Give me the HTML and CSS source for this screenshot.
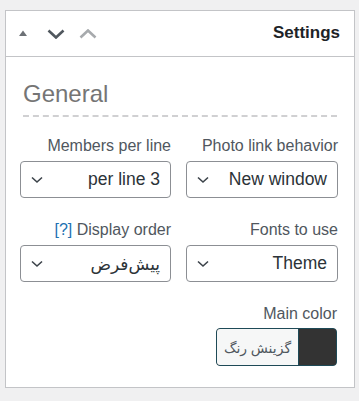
FILE: index.html
```html
<!DOCTYPE html>
<html lang="en">
<head>
<meta charset="utf-8">
<link rel="stylesheet" href="styles.css">
</head>
<body>
<div class="panel">
  <div class="panel-head">
    <div class="head-icons">
      <svg class="ico-tri" width="8" height="6" viewBox="0 0 8 6"><path d="M0 6 L4 0.5 L8 6 Z" fill="#6d7176"/></svg>
      <svg class="ico-down" width="18" height="10" viewBox="0 0 18 10"><path d="M1.5 1.5 L9 8.5 L16.5 1.5" fill="none" stroke="#50575e" stroke-width="2.6"/></svg>
      <svg class="ico-up" width="18" height="10" viewBox="0 0 18 10"><path d="M1.5 8.5 L9 1.5 L16.5 8.5" fill="none" stroke="#a7aaad" stroke-width="2.6"/></svg>
    </div>
    <h2 class="panel-title">Settings</h2>
  </div>
  <div class="panel-body">
    <h3 class="section-title">General</h3>
    <div class="fields">
      <div class="field">
        <label class="field-label">Members per line</label>
        <div class="select"><svg class="sel-chev" width="12" height="8" viewBox="0 0 12 8"><path d="M1 1.5 L6 6 L11 1.5" fill="none" stroke="#3c434a" stroke-width="1.6"/></svg><span class="sel-value">per line 3</span></div>
      </div>
      <div class="field">
        <label class="field-label">Photo link behavior</label>
        <div class="select"><svg class="sel-chev" width="12" height="8" viewBox="0 0 12 8"><path d="M1 1.5 L6 6 L11 1.5" fill="none" stroke="#3c434a" stroke-width="1.6"/></svg><span class="sel-value">New window</span></div>
      </div>
      <div class="field">
        <label class="field-label"><span class="help">[?]</span> Display order</label>
        <div class="select"><svg class="sel-chev" width="12" height="8" viewBox="0 0 12 8"><path d="M1 1.5 L6 6 L11 1.5" fill="none" stroke="#3c434a" stroke-width="1.6"/></svg><span class="sel-value fa" dir="rtl">پیش‌فرض</span></div>
      </div>
      <div class="field">
        <label class="field-label">Fonts to use</label>
        <div class="select"><svg class="sel-chev" width="12" height="8" viewBox="0 0 12 8"><path d="M1 1.5 L6 6 L11 1.5" fill="none" stroke="#3c434a" stroke-width="1.6"/></svg><span class="sel-value">Theme</span></div>
      </div>
    </div>
    <div class="color-field">
      <label class="field-label">Main color</label>
      <div class="color-btn">
        <span class="color-text" dir="rtl">گزینش رنگ</span>
        <span class="color-swatch"></span>
      </div>
    </div>
  </div>
</div>
</body>
</html>
```
FILE: styles.css
```css
* { box-sizing: border-box; }
html, body { margin: 0; padding: 0; }
body {
  background: #f0f0f1;
  font-family: "Liberation Sans", Arial, sans-serif;
  color: #3c434a;
  width: 359px;
  height: 401px;
  overflow: hidden;
}
.panel {
  margin: 10px 0 0 5px;
  width: 350px;
  height: 378px;
  background: #fff;
  border: 1px solid #c3c4c7;
}
.panel-head {
  height: 46px;
  border-bottom: 1px solid #c3c4c7;
  display: flex;
  align-items: center;
  justify-content: space-between;
  padding: 0 14px 0 13px;
}
.head-icons {
  display: flex;
  align-items: center;
  gap: 14px;
}
.ico-tri { margin-top: -2px; margin-right: 6px; }
.panel-title {
  margin: 0;
  font-size: 17px;
  font-weight: bold;
  color: #1d2327;
  margin-top: -1px;
}
.panel-body {
  padding: 22px 15px 0 14px;
}
.section-title {
  margin: 0 0 0 3px;
  font-size: 24px;
  font-weight: normal;
  color: #757575;
  line-height: 29px;
  padding-bottom: 7px;
  border-bottom: 2px dashed #d0d0d2;
  width: 314px;
}
.fields {
  display: grid;
  grid-template-columns: 151px 152px;
  column-gap: 15px;
  row-gap: 22px;
  margin-top: 19px;
}
.field {
  display: flex;
  flex-direction: column;
  align-items: stretch;
}
.field-label {
  text-align: right;
  font-size: 16px;
  line-height: 20px;
  color: #50575e;
  margin-bottom: 5px;
}
.help { color: #2271b1; }
.select {
  height: 37px;
  border: 1px solid #8c8f94;
  border-radius: 4px;
  display: flex;
  align-items: center;
  justify-content: space-between;
  padding: 0 10px 0 10px;
  background: #fff;
}
.sel-chev { margin-top: 1px; }
.sel-value {
  font-size: 17.5px;
  color: #2c3338;
}
.sel-value.fa {
  font-family: "Noto Sans", "DejaVu Sans", sans-serif;
  font-size: 17px;
}
.color-field {
  display: flex;
  flex-direction: column;
  align-items: flex-end;
  margin-top: 22px;
  padding-right: 2px;
}
.color-field .field-label { margin-bottom: 4px; }
.color-btn {
  width: 121px;
  height: 38px;
  border: 1px solid #1e4a57;
  border-radius: 4px;
  display: flex;
  overflow: hidden;
  background: #333;
}
.color-text {
  width: 82px;
  background: #f6f7f7;
  border-right: 1px solid #1e4a57;
  display: flex;
  align-items: center;
  justify-content: center;
  font-family: "Noto Sans", "DejaVu Sans", sans-serif;
  font-size: 14px;
  color: #50575e;
}
.color-swatch { flex: 1; background: #333; }
```
